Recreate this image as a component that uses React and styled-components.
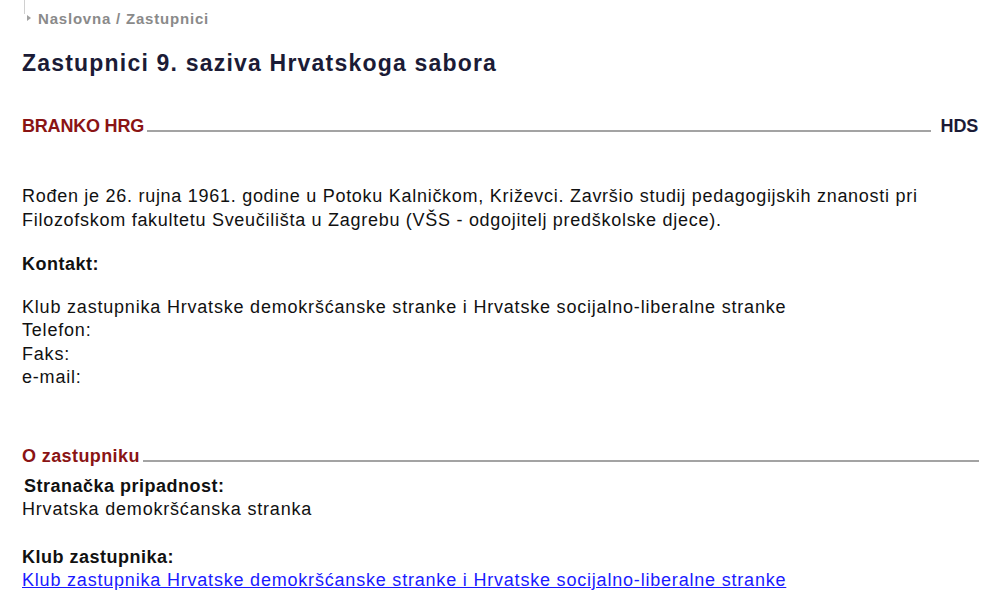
import React from 'react';
import styled, { createGlobalStyle } from 'styled-components';

const GlobalStyle = createGlobalStyle`
  html, body {
    margin: 0;
    padding: 0;
    background: #fff;
  }
  body {
    font-family: 'Liberation Sans', Arial, sans-serif;
    color: #111;
  }
`;

const Page = styled.div`
  width: 1000px;
  height: 609px;
  overflow: hidden;
  padding: 0 21px 0 22px;
  box-sizing: border-box;
`;

const Crumbs = styled.div`
  position: relative;
  display: flex;
  align-items: center;
  gap: 5px;
  height: 36px;
  padding-left: 5px;
  font-size: 15px;
  font-weight: bold;
  letter-spacing: 0.8px;
  color: #8a8a8a;

  &::before {
    content: '';
    position: absolute;
    left: 2px;
    top: 0;
    height: 14px;
    border-left: 1px solid #d0d0d0;
  }
`;

const Arrow = styled.span`
  width: 0;
  height: 0;
  border-top: 3px solid transparent;
  border-bottom: 3px solid transparent;
  border-left: 4px solid #a0a0a0;
  margin-right: 2px;
`;

const Title = styled.h1`
  margin: 14px 0 0;
  font-size: 23px;
  line-height: 26px;
  font-weight: bold;
  letter-spacing: 1.2px;
  color: #1b1b36;
`;

const SectionHead = styled.div`
  display: flex;
  align-items: flex-end;
  gap: 3px;
  margin-top: ${p => p.$top}px;
`;

const HeadLabel = styled.span`
  font-size: 18px;
  font-weight: bold;
  color: ${p => p.$color};
  letter-spacing: ${p => p.$spacing || 0}px;
  line-height: 18px;
`;

const Rule = styled.span`
  flex: 1;
  height: 0;
  border-bottom: 2px solid #a3a3a3;
  margin-bottom: 3px;
`;

const Party = styled(HeadLabel)`
  margin-left: 7px;
  margin-right: 1px;
`;

const Para = styled.p`
  margin: ${p => p.$top}px 0 0;
  font-size: 18px;
  line-height: 23.5px;
  letter-spacing: 0.72px;
  color: #111;
`;

const Bold = styled.div`
  margin-top: ${p => p.$top}px;
  padding-left: ${p => p.$indent || 0}px;
  font-size: 18px;
  font-weight: bold;
  line-height: 23.5px;
  letter-spacing: 0.5px;
  color: #111;
`;

const Lines = styled.div`
  margin-top: ${p => p.$top || 0}px;
  display: flex;
  flex-direction: column;
  font-size: 18px;
  line-height: 23.5px;
  letter-spacing: 0.8px;
  color: #111;
`;

const ClubLink = styled.a`
  font-size: 18px;
  line-height: 23.5px;
  letter-spacing: 0.8px;
  color: #1a1aff;
  text-decoration: underline;
`;

export default function App() {
  return (
    <Page>
      <GlobalStyle />
      <Crumbs>
        <Arrow />
        <span>Naslovna / Zastupnici</span>
      </Crumbs>
      <Title>Zastupnici 9. saziva Hrvatskoga sabora</Title>

      <SectionHead $top={41}>
        <HeadLabel $color="#8a1414" $spacing={-0.2}>BRANKO HRG</HeadLabel>
        <Rule />
        <Party $color="#1b1b36" $spacing={-0.2}>HDS</Party>
      </SectionHead>

      <Para $top={50}>
        Rođen je 26. rujna 1961. godine u Potoku Kalničkom, Križevci. Završio studij pedagogijskih znanosti pri
        Filozofskom fakultetu Sveučilišta u Zagrebu (VŠS - odgojitelj predškolske djece).
      </Para>

      <Bold $top={21}>Kontakt:</Bold>

      <Lines $top={19}>
        <span>Klub zastupnika Hrvatske demokršćanske stranke i Hrvatske socijalno-liberalne stranke</span>
        <span>Telefon:</span>
        <span>Faks:</span>
        <span>e-mail:</span>
      </Lines>

      <SectionHead $top={57}>
        <HeadLabel $color="#8a1414" $spacing={0.4}>O zastupniku</HeadLabel>
        <Rule />
      </SectionHead>

      <Bold $top={10} $indent={2}>Stranačka pripadnost:</Bold>
      <Lines>
        <span>Hrvatska demokršćanska stranka</span>
      </Lines>

      <Bold $top={24}>Klub zastupnika:</Bold>
      <ClubLink href="#">
        Klub zastupnika Hrvatske demokršćanske stranke i Hrvatske socijalno-liberalne stranke
      </ClubLink>
    </Page>
  );
}
